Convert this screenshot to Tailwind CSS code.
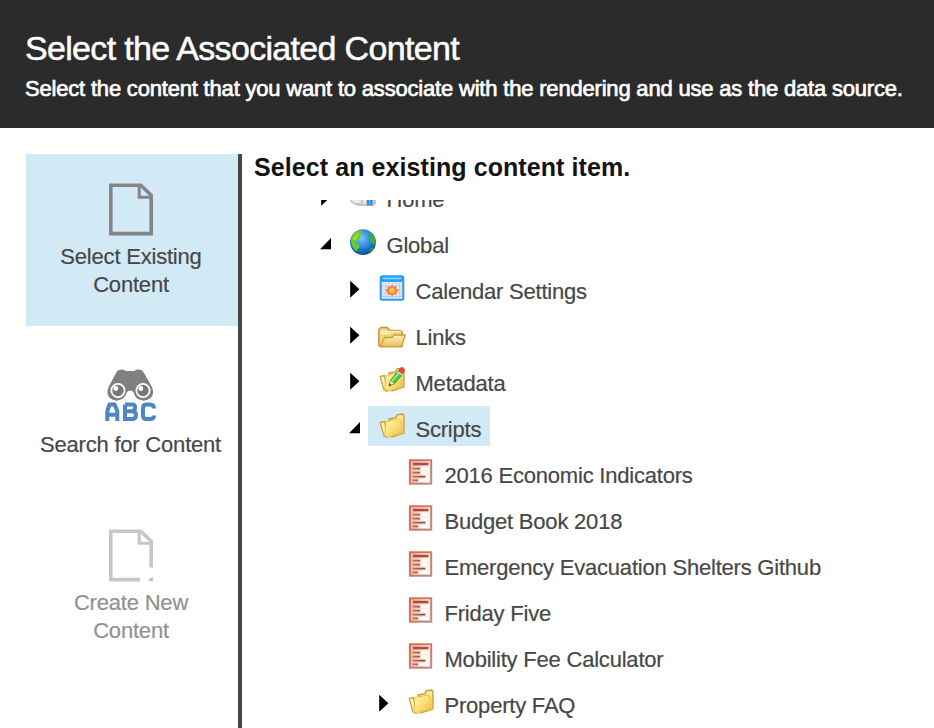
<!DOCTYPE html>
<html lang="en">
<head>
<meta charset="utf-8">
<title>Select the Associated Content</title>
<script src="https://cdn.jsdelivr.net/npm/@tailwindcss/browser@4"></script>
</head>
<body class="h-[728px] w-[934px] overflow-hidden bg-white font-['Liberation_Sans',Arial,sans-serif] text-[22px] text-[#474747]">
<svg width="0" height="0" class="absolute">
  <defs>
    <linearGradient id="gold" x1="0" y1="0" x2="1" y2="1"><stop offset="0" stop-color="#fff6b4"/><stop offset=".5" stop-color="#fbe078"/><stop offset="1" stop-color="#e9b93c"/></linearGradient>
    <linearGradient id="tan" x1="0" y1="0" x2="0" y2="1"><stop offset="0" stop-color="#fdf0bb"/><stop offset="1" stop-color="#e9bd5c"/></linearGradient>
    <radialGradient id="sea" cx=".45" cy=".35" r=".65"><stop offset="0" stop-color="#7cc4f8"/><stop offset=".6" stop-color="#237fdb"/><stop offset="1" stop-color="#0b4a9c"/></radialGradient>
    <radialGradient id="sun"><stop offset="0" stop-color="#ffc62e"/><stop offset=".5" stop-color="#ff8a2c"/><stop offset="1" stop-color="#f4623a"/></radialGradient>
    <linearGradient id="red" x1="0" y1="0" x2="1" y2="1"><stop offset="0" stop-color="#e0654d"/><stop offset="1" stop-color="#b98c88"/></linearGradient>
    <linearGradient id="paper" x1="0" y1="0" x2="1" y2="0"><stop offset="0" stop-color="#edb9a4"/><stop offset=".6" stop-color="#f8e6d8"/><stop offset="1" stop-color="#fbf3ea"/></linearGradient>
    <linearGradient id="ink" gradientUnits="userSpaceOnUse" x1="4" y1="0" x2="20" y2="0"><stop offset="0" stop-color="#cf7b66"/><stop offset=".5" stop-color="#a0594b"/><stop offset="1" stop-color="#8f4238"/></linearGradient>
    <symbol id="closed" viewBox="0 0 19 40"><path d="M1.2 12.7 10.4 21.2 1.2 29.7Z" fill="#000"/></symbol>
    <symbol id="open" viewBox="0 0 19 40"><path d="M11 16V27.3H0Z" fill="#000"/></symbol>
    <symbol id="folder" viewBox="0 0 28 40">
      <path d="M11 13 18 11.700 19 8.800 24.600 8 26 9.200V27L14 31Z" fill="#fbe68e" stroke="#c19a35" stroke-width="1.300" stroke-linejoin="round"/>
      <path d="M2.200 16.500 6.500 15.500 9 31.500 6 30Z" fill="#fdf3b4" stroke="#cba544" stroke-width="1.300" stroke-linejoin="round"/>
      <path d="M8 15.600 20.500 13.200 24 15.600V27.300L9 31.600 6.800 28Z" fill="url(#gold)" stroke="#dcb547" stroke-width=".8"/>
    </symbol>
    <symbol id="doc" viewBox="0 0 28 40">
      <rect x="2.900" y="8.300" width="21.300" height="23.400" fill="url(#paper)" stroke="url(#red)" stroke-width="2"/>
      <path d="M6 12H21.500" stroke="#b0483b" stroke-width="2.600"/>
      <path d="M14.500 16.800H21.500M14.500 20.800H21.500M17 24.800H21.500M12 28.600H21.500" stroke="#fffdf8" stroke-width="3"/>
      <path d="M5.500 16.600H13M5.500 20.600H13M5.500 24.600H18.500M5.500 28.400H11" stroke="url(#ink)" stroke-width="1.800"/>
    </symbol>
  </defs>
</svg>

<header class="h-32 bg-[#2b2b2b] pl-[25px] pt-[28px] text-white">
  <h1 class="whitespace-nowrap text-[34px] leading-[40px] tracking-[-0.68px] [-webkit-text-stroke:0.5px_white]">Select the Associated Content</h1>
  <p class="mt-[7px] whitespace-nowrap leading-[28px] tracking-[-0.19px] [-webkit-text-stroke:0.7px_white]">Select the content that you want to associate with the rendering and use as the data source.</p>
</header>

<div class="flex h-[600px] pl-[26px] pt-[26px]">
  <nav class="flex w-[216px] shrink-0 flex-col gap-4 border-r-4 border-[#474747] text-center leading-[28px] tracking-[-0.2px]">
    <div class="flex h-[172px] flex-col items-center bg-[#d1eaf6] pr-[2px] pt-[25px]">
      <svg class="mb-[4px] h-[60px] w-[60px] shrink-0" viewBox="-1 0 60 60" fill="none" stroke="#858585" stroke-width="3.600"><path d="M8.800 6.200H38.800L49.200 16.300V54.600H8.800Z"/><path d="M37.200 6V18.200H49" stroke-width="3"/></svg>
      <span class="w-[160px] [-webkit-text-stroke:0.2px_#474747]">Select Existing Content</span>
    </div>
    <div class="flex h-[142px] flex-col items-center pr-[3px] pt-[25px]">
      <svg class="mb-[4px] h-[60px] w-[60px] shrink-0" viewBox="0 0 60 60">
        <path d="M15 6Q17 2 22 2.600L25 4H33L36 2.600Q41 2 43 6L51 20Q54 27 49.500 31Q43 36 36 31.500Q33.500 29 32.500 25Q29 22 26 25Q25 29 22 31.500Q15 36 9 31Q4.500 27 7.500 20Z" fill="#808080"/>
        <g fill="#777" stroke="#fff" stroke-width="1.800"><circle cx="17" cy="23.500" r="6.600"/><circle cx="42" cy="23.500" r="6.600"/></g>
        <g fill="#fff"><circle cx="14.800" cy="21.500" r="2.400"/><circle cx="39.800" cy="21.500" r="2.400"/></g>
        <g fill="none" stroke="#4c86c6" stroke-width="4"><path d="M6.300 54V44L8.500 37.500H13.500L16.300 44V54M6.300 47.800H16.300"/><path d="M24 37.500H31.500Q34 37.500 34 40.500 34 44 31 44.300H24M31 44.300Q35 44.500 35 48 35 52 31 52H24V37.500"/><path d="M53 41.500Q53 37.500 49 37.500H45.500Q42 37.500 42 41V48.500Q42 52 45.500 52H49Q53 52 53 48.500"/></g>
      </svg>
      <span class="whitespace-nowrap [-webkit-text-stroke:0.2px_#474747]">Search for Content</span>
    </div>
    <div class="flex h-[172px] flex-col items-center pr-[2px] pt-[25px] text-[#919191]">
      <svg class="mb-[4px] h-[60px] w-[60px] shrink-0" viewBox="-1 0 60 60" fill="none" stroke="#c6c6c6" stroke-width="3.600"><path d="M49.200 42.500V16.300L38.800 6.200H8.800V54.600H38"/><path d="M37.200 6V18.200H49" stroke-width="3"/><path d="M46.500 56.300H51V52.500Q47 52.500 46.500 56.300Z" fill="#c2c2c2" stroke="none"/></svg>
      <span class="w-[160px] [-webkit-text-stroke:0.2px_#919191]">Create New Content</span>
    </div>
  </nav>

  <main class="flex min-w-0 flex-1 flex-col pl-[12px]">
    <h2 class="h-[46px] whitespace-nowrap text-[25px] font-bold leading-[27px] tracking-[0.08px] text-[#131313]">Select an existing content item.</h2>
    <div class="min-h-0 flex-1 overflow-hidden">
      <ul class="-mt-6 flex flex-col gap-[6px] whitespace-nowrap pl-[66px] leading-[33px] tracking-[-0.21px] [-webkit-text-stroke:0.2px_#474747]">
        <li class="flex h-10">
          <svg class="h-10 w-[19px]"><use href="#closed"/></svg>
          <div class="flex pl-[10px] pr-[8px]">
            <svg class="mr-[9.5px] h-10 w-7" viewBox="0 0 28 40"><path d="M1 22H27V28Q26 30 23 30H10Q4 29 1 25Z" fill="#c4c4c4"/><path d="M2 23H12V27H5Z" fill="#e9eef2"/><path d="M14 22H17V28H14Z" fill="#e8e8e8"/><path d="M18 22H23.500V29.500H18Z" fill="#2d8be0"/><path d="M20.500 22V29" stroke="#9dd0f8" stroke-width=".7"/></svg>
            <span class="pt-[7px]">Home</span>
          </div>
        </li>
        <li class="flex h-10">
          <svg class="h-10 w-[19px]"><use href="#open"/></svg>
          <div class="flex pl-[10px] pr-[8px]">
            <svg class="mr-[9.5px] h-10 w-7" viewBox="0 0 28 40"><circle cx="14" cy="20.200" r="12.900" fill="url(#sea)"/><path d="M2.500 15Q5.500 9 11 8.500L14 9.500 12.500 11 13 13 10.500 14.500 11 17 7.500 18.500 7 20.500 9.500 22 10.500 25 8.500 27.500 8 29.500 5 27Q1 22 2.500 15Z" fill="#6bcb2b"/><path d="M19 9.500 22.500 11.500Q27 16 26.400 21L24.500 23 22.500 20 19.500 19 20 16 21.500 14.500Z" fill="#3fae38"/><path d="M21.500 26 25 25Q23 30 20 30.500Z" fill="#319340"/><path d="M4 18Q6 12 10.500 10.500L9 14 6.500 18Z" fill="#a4e03c"/></svg>
            <span class="pt-[7px]">Global</span>
          </div>
        </li>
        <li class="ml-[29px] flex h-10">
          <svg class="h-10 w-[19px]"><use href="#closed"/></svg>
          <div class="flex pl-[10px] pr-[8px]">
            <svg class="mr-[9.5px] h-10 w-7" viewBox="0 0 28 40"><rect x="2.700" y="8.200" width="22.600" height="23.500" rx="1.500" fill="#e4e9f8" stroke="#2d98f3" stroke-width="2"/><path d="M2.500 8H25.500V14H2.500Z" fill="#2aa0fb"/><path d="M5 10.500H23" stroke="#8fd3ff" stroke-width="1.500"/><path d="M7.500 15V30M11 15V30M14.500 15V30M18 15V30M21.500 15V30M4 18H24M4 21.500H24M4 25H24M4 28.500H24" stroke="#b8c0e2" stroke-width=".7"/><path d="M14 16.700 15.700 18.700 18.300 18.200 18.400 20.800 20.600 22.500 18.500 24.200 18.200 26.800 15.700 26.300 14 28.300 12.300 26.300 9.700 26.800 9.500 24.200 7.400 22.500 9.500 20.800 9.700 18.200 12.300 18.700Z" fill="url(#sun)"/><circle cx="14" cy="22.500" r="2.400" fill="#ffd040"/></svg>
            <span class="pt-[7px]">Calendar Settings</span>
          </div>
        </li>
        <li class="ml-[29px] flex h-10">
          <svg class="h-10 w-[19px]"><use href="#closed"/></svg>
          <div class="flex pl-[10px] pr-[8px]">
            <svg class="mr-[9.5px] h-10 w-7" viewBox="0 0 28 40"><path d="M.8 31.500V15.500L3 13.500H9.500L11.500 16.500H22.500L24.200 18.200V32.500H2.500Z" fill="#f2d581" stroke="#c29432" stroke-width="1.400" stroke-linejoin="round"/><path d="M2.500 17.500H23M2.500 19.500H12" stroke="#fff3c3" stroke-width="1.500"/><path d="M2 32.700 6.500 23.500H14L16 21H27.300L23.500 32.700Z" fill="url(#tan)" stroke="#c79a3b" stroke-width="1.300" stroke-linejoin="round"/></svg>
            <span class="pt-[7px]">Links</span>
          </div>
        </li>
        <li class="ml-[29px] flex h-10">
          <svg class="h-10 w-[19px]"><use href="#closed"/></svg>
          <div class="flex pl-[10px] pr-[8px]">
            <svg class="mr-[9.5px] h-10 w-7" viewBox="0 0 28 40"><use href="#folder" width="28" height="40"/><path d="M11 26 12.500 20.500 20.500 10.500 25 13.500 16.500 23.500Z" fill="#4cc94a" stroke="#208b2c" stroke-width=".9"/><path d="M13.500 21.500 21.500 12" stroke="#a9f19b" stroke-width="1.500"/><path d="M11 26 12.500 20.500 16.500 23.500Z" fill="#ffe8b5" stroke="#8b8b43" stroke-width=".5"/><path d="M11 26 11.700 23.600 13.200 24.700Z" fill="#222"/><path d="M19.800 11 22 8Q25 6.200 26.800 9.500L26.500 11.500 24.500 14Z" fill="#e5483f"/><path d="M19.300 11.500 24 15" stroke="#d6dce0" stroke-width="1.500"/></svg>
            <span class="pt-[7px]">Metadata</span>
          </div>
        </li>
        <li class="ml-[29px] flex h-10">
          <svg class="h-10 w-[19px]"><use href="#open"/></svg>
          <div class="flex w-[122px] bg-[#d1eaf6] pl-[10px]">
            <svg class="mr-[9.5px] h-10 w-7"><use href="#folder"/></svg>
            <span class="pt-[7px]">Scripts</span>
          </div>
        </li>
        <li class="ml-[87px] flex h-10"><svg class="mr-[9.5px] h-10 w-7"><use href="#doc"/></svg><span class="pt-[7px]">2016 Economic Indicators</span></li>
        <li class="ml-[87px] flex h-10"><svg class="mr-[9.5px] h-10 w-7"><use href="#doc"/></svg><span class="pt-[7px]">Budget Book 2018</span></li>
        <li class="ml-[87px] flex h-10"><svg class="mr-[9.5px] h-10 w-7"><use href="#doc"/></svg><span class="pt-[7px]">Emergency Evacuation Shelters Github</span></li>
        <li class="ml-[87px] flex h-10"><svg class="mr-[9.5px] h-10 w-7"><use href="#doc"/></svg><span class="pt-[7px]">Friday Five</span></li>
        <li class="ml-[87px] flex h-10"><svg class="mr-[9.5px] h-10 w-7"><use href="#doc"/></svg><span class="pt-[7px]">Mobility Fee Calculator</span></li>
        <li class="ml-[58px] flex h-10">
          <svg class="h-10 w-[19px]"><use href="#closed"/></svg>
          <div class="flex pl-[10px] pr-[8px]">
            <svg class="mr-[9.5px] h-10 w-7"><use href="#folder"/></svg>
            <span class="pt-[7px]">Property FAQ</span>
          </div>
        </li>
      </ul>
    </div>
  </main>
</div>
</body>
</html>
